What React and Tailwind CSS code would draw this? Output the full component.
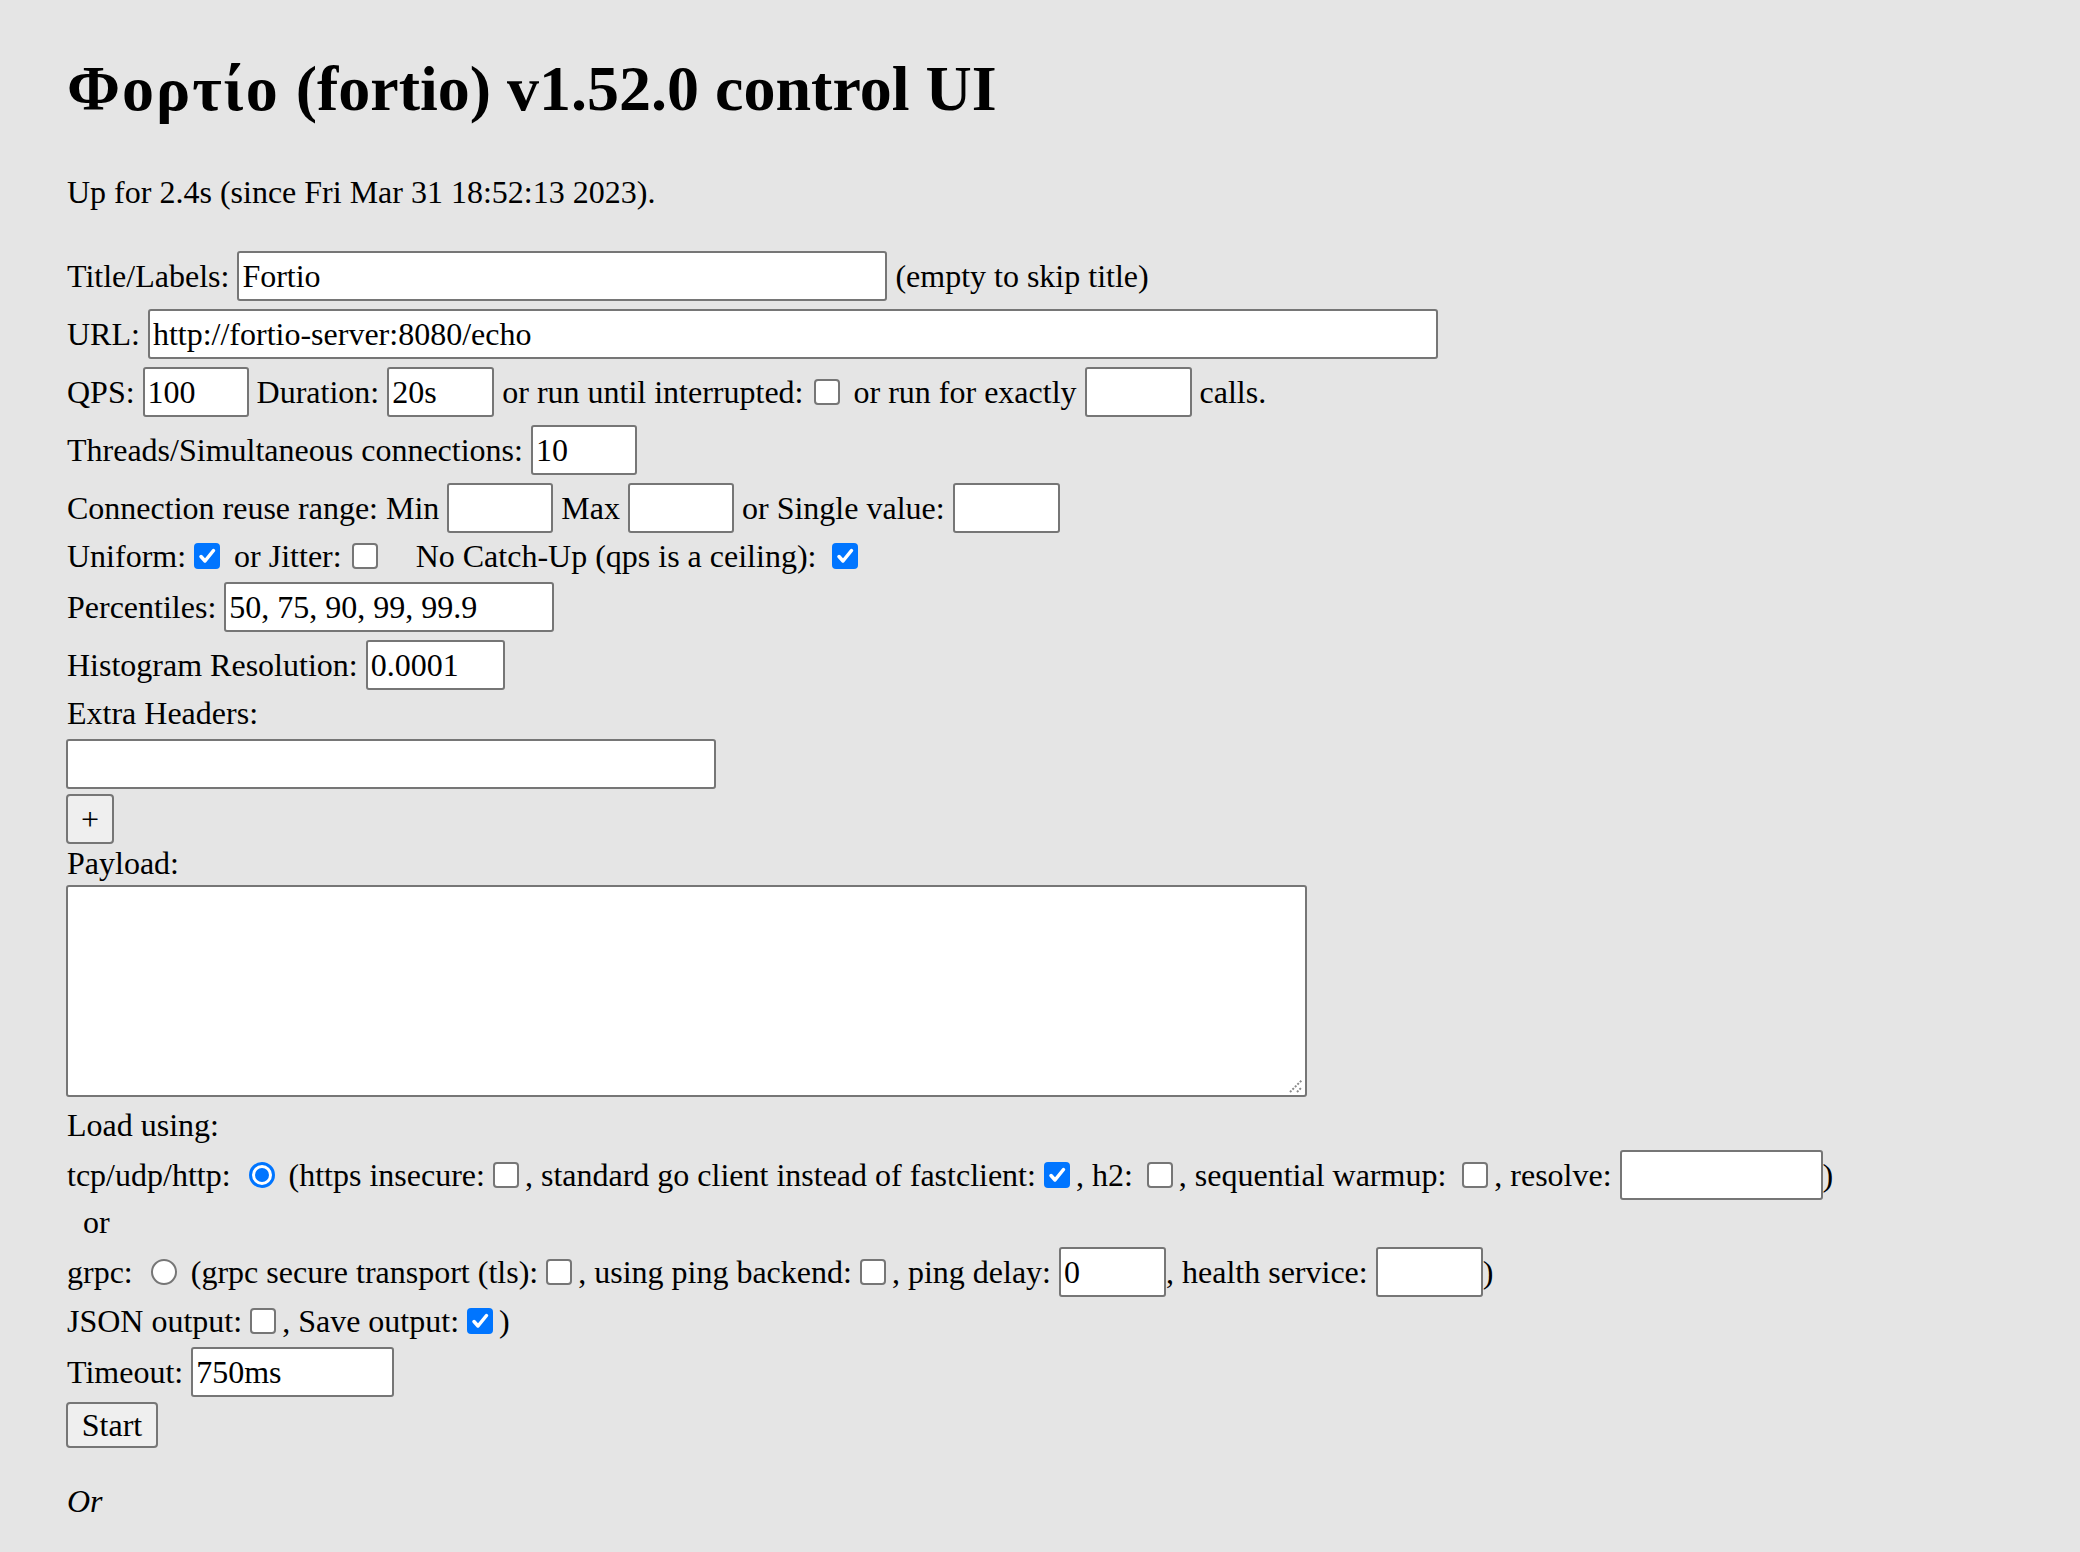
import React from 'react';

const Field = ({ w, value = '' }) => (
    <input
        type="text"
        defaultValue={value}
        className={`h-[50px] ${w} shrink-0 border-2 border-[#767676] rounded-[3px] bg-white px-[3px] text-black outline-none`}
    />
);

const Check = ({ on, cls = 'ml-[8px] mr-[6px]' }) =>
    on ? (
        <span className={`${cls} shrink-0 w-[26px] h-[26px] rounded-[4px] bg-[#0075ff] flex items-center justify-center`}>
            <svg width="26" height="26" viewBox="0 0 26 26" fill="none">
                <path d="M7 13.5l4 4.5L19.5 7.5" stroke="white" strokeWidth="3.5" strokeLinecap="round" strokeLinejoin="round" />
            </svg>
        </span>
    ) : (
        <span className={`${cls} shrink-0 w-[26px] h-[26px] rounded-[4px] border-2 border-[#767676] bg-white`} />
    );

const Radio = ({ on }) =>
    on ? (
        <span className="ml-[10px] mr-[6px] shrink-0 w-[26px] h-[26px] rounded-full border-[3px] border-[#0075ff] bg-white flex items-center justify-center">
            <span className="w-[14px] h-[14px] rounded-full bg-[#0075ff]" />
        </span>
    ) : (
        <span className="ml-[10px] mr-[6px] shrink-0 w-[26px] h-[26px] rounded-full border-2 border-[#767676] bg-white" />
    );

const T = ({ children }) => <span className="leading-[37px]">{children}</span>;

export default function App() {
    return (
        <div className="min-h-screen bg-[#e5e5e5] text-black font-['Liberation_Serif',serif] text-[32px] pl-[67px] pt-[52px] pb-[40px] whitespace-pre">
            <h1 className="text-[64px] leading-[74px] font-bold">
                <span className="tracking-[2px]">Φορτίο</span> (fortio) v1.52.0 control UI
            </h1>

            <p className="mt-[48px] leading-[37px]">Up for 2.4s (since Fri Mar 31 18:52:13 2023).</p>

            <form className="mt-[36px]">
                {/* main params */}
                <div className="h-[58px] flex items-center">
                    <T>Title/Labels: </T>
                    <Field w="w-[650px]" value="Fortio" />
                    <T> (empty to skip title)</T>
                </div>
                <div className="h-[58px] flex items-center">
                    <T>URL: </T>
                    <Field w="w-[1290px]" value="http://fortio-server:8080/echo" />
                </div>
                <div className="h-[58px] flex items-center">
                    <T>QPS: </T>
                    <Field w="w-[106px]" value="100" />
                    <T> Duration: </T>
                    <Field w="w-[107px]" value="20s" />
                    <T> or run until interrupted:</T>
                    <Check cls="ml-[10px] mr-[6px]" />
                    <T> or run for exactly </T>
                    <Field w="w-[107px]" />
                    <T> calls.</T>
                </div>
                <div className="h-[58px] flex items-center">
                    <T>Threads/Simultaneous connections: </T>
                    <Field w="w-[106px]" value="10" />
                </div>
                <div className="h-[58px] flex items-center">
                    <T>Connection reuse range: Min </T>
                    <Field w="w-[106px]" />
                    <T> Max </T>
                    <Field w="w-[106px]" />
                    <T> or Single value: </T>
                    <Field w="w-[107px]" />
                </div>
                <div className="h-[41px] pb-[3px] flex items-center">
                    <T>Uniform:</T>
                    <Check on />
                    <T> or Jitter:</T>
                    <Check cls="ml-[10px] mr-[6px]" />
                    <T>    No Catch-Up (qps is a ceiling): </T>
                    <Check on />
                </div>
                <div className="h-[58px] flex items-center">
                    <T>Percentiles: </T>
                    <Field w="w-[330px]" value="50, 75, 90, 99, 99.9" />
                </div>
                <div className="h-[58px] flex items-center">
                    <T>Histogram Resolution: </T>
                    <Field w="w-[139px]" value="0.0001" />
                </div>

                {/* headers and payload */}
                <div className="mt-[1px] leading-[37px]">Extra Headers:</div>
                <div className="mt-[7px] flex -ml-[1px]">
                    <Field w="w-[650px]" />
                </div>
                <button type="button" className="mt-[5px] -ml-[1px] block w-[48px] h-[50px] bg-[#efefef] border-2 border-[#767676] rounded-[4px] leading-none">+</button>
                <div className="mt-[1px] leading-[37px]">Payload:</div>
                <div className="relative mt-[3px] -ml-[1px] w-[1241px] h-[212px]">
                    <textarea className="w-full h-full resize-none border-2 border-[#767676] rounded-[3px] bg-white outline-none" />
                    <svg className="absolute right-[3px] bottom-[3px]" width="16" height="16" viewBox="0 0 16 16">
                        <path d="M2 14L14 2M9 14L14 9" stroke="#8a8a8a" strokeWidth="2" strokeDasharray="2 1.5" />
                    </svg>
                </div>

                {/* load options */}
                <div className="mt-[10px] leading-[37px]">Load using:</div>
                <div className="mt-[2px] h-[58px] flex items-center">
                    <T>tcp/udp/http: </T>
                    <Radio on />
                    <T> (https insecure:</T>
                    <Check />
                    <T>, standard go client instead of fastclient:</T>
                    <Check on />
                    <T>, h2:</T>
                    <Check cls="ml-[14px] mr-[6px]" />
                    <T>, sequential warmup: </T>
                    <Check />
                    <T>, resolve: </T>
                    <Field w="w-[203px]" />
                    <T>)</T>
                </div>
                <div className="pl-[16px] leading-[37px]">or</div>
                <div className="mt-[2px] h-[58px] flex items-center">
                    <T>grpc: </T>
                    <Radio />
                    <T> (grpc secure transport (tls):</T>
                    <Check />
                    <T>, using ping backend:</T>
                    <Check />
                    <T>, ping delay: </T>
                    <Field w="w-[107px]" value="0" />
                    <T>, health service: </T>
                    <Field w="w-[107px]" />
                    <T>)</T>
                </div>
                <div className="h-[40px] flex items-center">
                    <T>JSON output:</T>
                    <Check />
                    <T>, Save output:</T>
                    <Check on cls="ml-[8px] mr-[6px]" />
                    <T>)</T>
                </div>
                <div className="mt-[2px] h-[58px] flex items-center">
                    <T>Timeout: </T>
                    <Field w="w-[203px]" value="750ms" />
                </div>
                <button type="button" className="mt-[1px] -ml-[1px] block w-[92px] h-[46px] bg-[#efefef] border-2 border-[#767676] rounded-[4px] leading-none">Start</button>
            </form>

            <p className="mt-[35px] leading-[37px] italic">Or</p>
        </div>
    );
}
